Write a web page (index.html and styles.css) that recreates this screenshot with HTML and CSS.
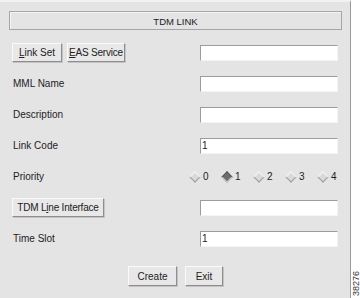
FILE: index.html
```html
<!DOCTYPE html>
<html lang="en">
  <head>
    <meta charset="UTF-8" />
    <title>TDM Link</title>
    <link rel="stylesheet" href="styles.css">
  </head>
  <body>
    <div class="window">
      <div class="title">TDM LINK</div>

      <div class="form">
        <div class="label btns">
          <button class="btn b-link"><u>L</u>ink Set</button>
          <button class="btn b-eas"><u>E</u>AS Service</button>
        </div>
        <input class="field" type="text" />

        <div class="label">MML Name</div>
        <input class="field" type="text" />

        <div class="label">Description</div>
        <input class="field" type="text" />

        <div class="label">Link Code</div>
        <input class="field" type="text" value="1" />

        <div class="label">Priority</div>
        <div class="radios">
          <span class="radio"><i class="dia"></i>0</span>
          <span class="radio"><i class="dia on"></i>1</span>
          <span class="radio"><i class="dia"></i>2</span>
          <span class="radio"><i class="dia"></i>3</span>
          <span class="radio"><i class="dia"></i>4</span>
        </div>

        <div class="label btns">
          <button class="btn b-tdm">TDM L<u>i</u>ne Interface</button>
        </div>
        <input class="field" type="text" />

        <div class="label">Time Slot</div>
        <input class="field" type="text" value="1" />
      </div>

      <div class="actions">
        <button class="btn b-create">Create</button>
        <button class="btn b-exit">Exit</button>
      </div>
    </div>

    <!-- figure number -->
    <div class="fignum">38276</div>
  </body>
</html>
```

FILE: styles.css
```css
body {
  margin: 0;
  background: #fff;
  font-family: "Liberation Sans", Arial, sans-serif;
  font-size: 10px;
  color: #222;
}

.window {
  width: 351px;
  height: 298px;
  box-sizing: border-box;
  padding: 9px 8px 0 9px;
  background: #e4e4e4;
  border-right: 1px solid #9a9a9a;
  border-top: 2px solid #f2f2f2;
}

.title {
  height: 19px;
  box-sizing: border-box;
  border: 1px solid #a6a6a6;
  box-shadow: inset 1px 1px 0 #f4f4f4;
  display: flex;
  align-items: center;
  justify-content: center;
  padding-top: 1px;
  font-size: 9.5px;
}

.form {
  display: grid;
  grid-template-columns: 1fr 138px;
  grid-auto-rows: 31px;
  align-items: center;
  margin-top: 7px;
  padding: 0 4px 0 3px;
}

.label {
  padding-left: 1px;
}

.btns {
  display: flex;
  gap: 5px;
  padding-left: 0;
}

.btn {
  font: inherit;
  color: inherit;
  background: #e8e8e8;
  border: 1px solid;
  border-color: #fafafa #8e8e8e #8e8e8e #fafafa;
  box-shadow: 1px 1px 0 #c4c4c4;
  height: 19px;
  padding: 0;
  margin: 0;
  white-space: nowrap;
}

.btn u {
  text-underline-offset: 1px;
}

.b-link { width: 50px; }
.b-eas { width: 58px; letter-spacing: -0.2px; }
.b-tdm { width: 92px; letter-spacing: -0.2px; }
.b-create { width: 49px; }
.b-exit { width: 38px; }

.field {
  font: inherit;
  color: inherit;
  height: 16px;
  box-sizing: border-box;
  background: #fff;
  border: 1px solid;
  border-color: #9c9c9c #f4f4f4 #f4f4f4 #9c9c9c;
  padding: 0 1px;
  margin: 0;
  outline: none;
}

.radios {
  display: flex;
  margin-left: -9px;
  gap: 13px;
}

.radio {
  display: flex;
  align-items: center;
  gap: 4px;
  width: 19px;
}

.dia {
  display: inline-block;
  width: 6px;
  height: 6px;
  transform: rotate(45deg);
  background: #d9d9d9;
  border: 1px solid;
  border-color: #f6f6f6 #9e9e9e #9e9e9e #f6f6f6;
}

.dia.on {
  background: #6e6e6e;
  border-color: #555 #cfcfcf #cfcfcf #555;
}

.actions {
  display: flex;
  justify-content: center;
  gap: 8px;
  margin-top: 12px;
}

.actions .btn {
  height: 20px;
}

.fignum {
  position: absolute;
  left: 352px;
  top: 271px;
  writing-mode: vertical-rl;
  transform: rotate(180deg);
  font-size: 9px;
  line-height: 8px;
  color: #333;
}
```
